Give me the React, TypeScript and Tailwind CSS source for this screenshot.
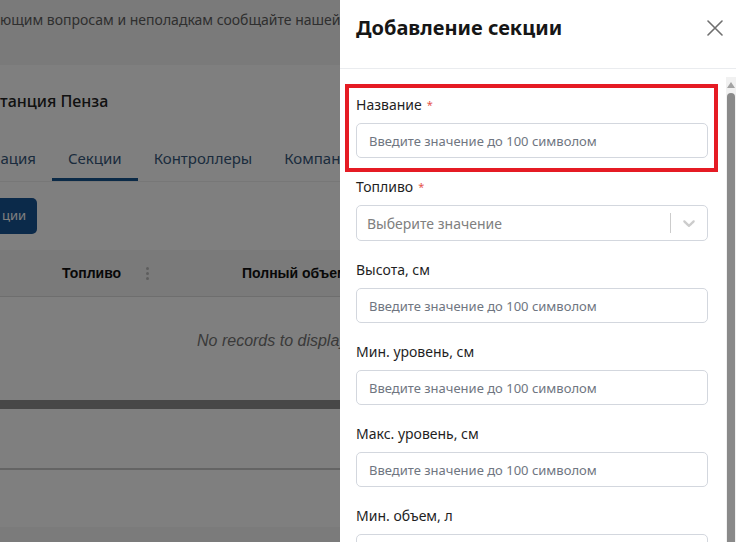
import React from "react";

const fields = ["Высота, см", "Мин. уровень, см", "Макс. уровень, см", "Мин. объем, л", "Макс. объем, л"];

function Label({ text, required }: { text: string; required?: boolean }) {
  return (
    <div className="h-5 leading-5 text-[14px] text-[#1f1f1f]">
      {text}
      {required && <span className="ml-[5px] text-[11px] align-top text-[#e5534b]">*</span>}
    </div>
  );
}

function TextField() {
  return (
    <input
      readOnly
      placeholder="Введите значение до 100 символом"
      className="mt-2 h-[35px] w-full rounded-[5px] border border-[#d3d7de] bg-white pl-3 text-[13px] outline-none placeholder:text-[#6f7681]"
    />
  );
}

function Page() {
  return (
    <div className="flex h-full w-full flex-col bg-white font-['Noto_Sans',sans-serif]">
      <div className="h-[65px] shrink-0 bg-[#f4f4f4] pt-[10px]">
        <div className="whitespace-nowrap text-[14px] leading-5 text-[#5e5e5e]">
          ющим вопросам и неполадкам сообщайте нашей технической поддержке
        </div>
      </div>
      <div className="mt-[22px] h-7 whitespace-nowrap text-[16px] font-medium leading-7 text-[#222]">танция Пенза</div>
      <div className="mt-[21px] flex h-[46px] border-b border-[#eeeeee] text-[15px] text-[#36577a]">
        <div className="flex h-[45px] w-[52px] items-center justify-end overflow-hidden whitespace-nowrap pr-4">мация</div>
        <div className="flex h-[45px] items-center border-b-[3px] border-[#17548f] px-4 pt-[3px]">Секции</div>
        <div className="flex h-[45px] items-center px-4">Контроллеры</div>
        <div className="flex h-[45px] items-center whitespace-nowrap px-4">Компании</div>
      </div>
      <div className="mt-4 flex h-9 w-[37px] items-center rounded-r-[5px] bg-[#175494] pl-[2px] text-[13px] text-white">ции</div>
      <div className="mt-4 flex h-[47px] items-center border-b border-[#dcdcdc] bg-[#f4f4f4] pl-[62px] font-['Liberation_Sans',sans-serif] text-[14px] font-bold text-[#111]">
        <span className="w-[83px]">Топливо</span>
        <span className="flex w-[4px] flex-col items-center gap-[2px]">
          <span className="h-[3px] w-[3px] rounded-full bg-[#bbb]" />
          <span className="h-[3px] w-[3px] rounded-full bg-[#bbb]" />
          <span className="h-[3px] w-[3px] rounded-full bg-[#bbb]" />
        </span>
        <span className="ml-[93px] whitespace-nowrap">Полный объем</span>
      </div>
      <div className="h-[103px] pl-[197px] pt-[32px] font-['Liberation_Sans',sans-serif] text-[16px] italic leading-6 text-[#757575] whitespace-nowrap">
        No records to display
      </div>
      <div className="h-[9px] bg-[#8f8f8f]" />
      <div className="h-[59px]" />
      <div className="h-[2px] bg-[#c8c8c8]" />
      <div className="h-[57px]" />
      <div className="flex-1 bg-[#f6f6f6]" />
    </div>
  );
}

export default function App() {
  return (
    <div className="relative h-[542px] w-[736px] overflow-hidden">
      <Page />
      <div className="absolute inset-0 bg-black/50" />
      <div className="absolute bottom-0 right-0 top-0 flex w-[396px] flex-col bg-white font-['Noto_Sans',sans-serif]">
        <div className="flex h-[69px] shrink-0 items-start justify-between border-b border-[#eaecef] pl-4 pr-[13px] pt-3">
          <div className="text-[20px] font-bold leading-8 text-[#161616]">Добавление секции</div>
          <svg width="16" height="16" viewBox="0 0 16 16" className="mt-2" fill="none" stroke="#6f6f6f" strokeWidth="1.6" strokeLinecap="round">
            <path d="M1 1L15 15M15 1L1 15" />
          </svg>
        </div>
        <div className="flex min-h-0 flex-1 pt-2">
          <div className="flex-1 overflow-hidden pl-4 pr-[18px] pt-[18px]">
            <div className="relative">
              <Label text="Название" required />
              <TextField />
              <div className="pointer-events-none absolute -left-[11px] -right-[10px] -top-[11px] -bottom-[14px] border-[4px] border-[#e51b24]" />
            </div>
            <div className="mt-[19px]">
              <Label text="Топливо" required />
              <div className="mt-2 flex h-9 items-center rounded-[5px] border border-[#d3d7de] bg-white">
                <div className="flex-1 pl-[10px] text-[14px] text-[#808080]">Выберите значение</div>
                <div className="h-5 w-px bg-[#cccccc]" />
                <div className="flex w-9 items-center justify-center">
                  <svg width="20" height="20" viewBox="0 0 20 20" fill="#cccccc">
                    <path d="M4.516 7.548c0.436-0.446 1.043-0.481 1.576 0l3.908 3.747 3.908-3.747c0.533-0.481 1.141-0.446 1.574 0 0.436 0.445 0.408 1.197 0 1.615-0.406 0.418-4.695 4.502-4.695 4.502-0.217 0.223-0.502 0.335-0.787 0.335s-0.57-0.112-0.789-0.335c0 0-4.287-4.084-4.695-4.502s-0.436-1.17 0-1.615z" />
                  </svg>
                </div>
              </div>
            </div>
            {fields.map((f) => (
              <div key={f} className="mt-[19px]">
                <Label text={f} />
                <TextField />
              </div>
            ))}
          </div>
          <div className="flex w-[10px] flex-col items-center bg-[#f1f1f1]">
            <svg width="8" height="6" viewBox="0 0 8 6" className="mt-[5px]" fill="#a3a3a3">
              <path d="M4 0L8 6H0z" />
            </svg>
            <div className="mt-[5px] w-[8px] flex-1 rounded-t-[4px] bg-[#8a8a8a]" />
          </div>
        </div>
      </div>
    </div>
  );
}
